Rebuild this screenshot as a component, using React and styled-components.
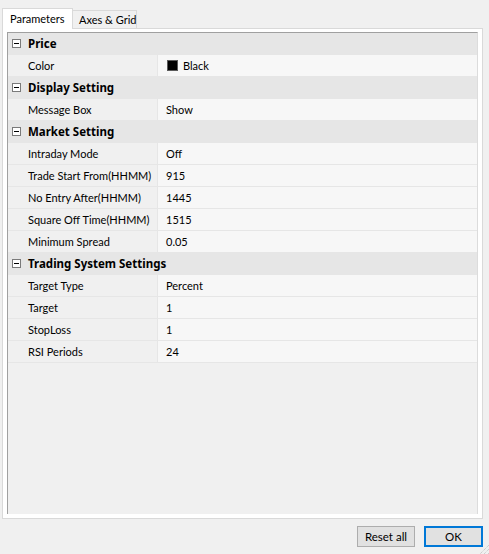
import React from 'react';
import styled, { createGlobalStyle } from 'styled-components';

const GlobalStyle = createGlobalStyle`
    html, body {
        margin: 0;
        padding: 0;
        background: #f0f0f0;
    }
    body {
        font-family: Lato, "Liberation Sans", sans-serif;
        font-size: 11px;
        color: #000;
    }
`;

const sections = [
    { title: 'Price', items: [{ label: 'Color', value: 'Black', swatch: '#000' }] },
    { title: 'Display Setting', items: [{ label: 'Message Box', value: 'Show' }] },
    {
        title: 'Market Setting',
        items: [
            { label: 'Intraday Mode', value: 'Off' },
            { label: 'Trade Start From(HHMM)', value: '915' },
            { label: 'No Entry After(HHMM)', value: '1445' },
            { label: 'Square Off Time(HHMM)', value: '1515' },
            { label: 'Minimum Spread', value: '0.05' },
        ],
    },
    {
        title: 'Trading System Settings',
        items: [
            { label: 'Target Type', value: 'Percent' },
            { label: 'Target', value: '1' },
            { label: 'StopLoss', value: '1' },
            { label: 'RSI Periods', value: '24' },
        ],
    },
];

const Window = styled.div`
    position: relative;
    width: 489px;
    height: 554px;
    display: flex;
    flex-direction: column;
    box-sizing: border-box;
    overflow: hidden;
`;

const TabStrip = styled.div`
    display: flex;
    align-items: flex-end;
    height: 28px;
    padding-left: 2px;
`;

const Tab = styled.div`
    display: flex;
    align-items: center;
    box-sizing: border-box;
    padding: 0 6px;
    border: 1px solid #d9d9d9;
    border-bottom: none;
    white-space: nowrap;
    ${({ $active }) => $active ? `
        position: relative;
        z-index: 1;
        height: 21px;
        margin-bottom: -1px;
        width: 71px;
        background: #fff;
        padding-left: 7px;
        padding-bottom: 1px;
    ` : `
        height: 18px;
        width: 64px;
        border-left: none;
        background: #f0f0f0;
    `}
`;

const Panel = styled.div`
    margin: 0 6px 0 2px;
    height: 491px;
    box-sizing: border-box;
    border: 1px solid #d9d9d9;
    background: #fff;
    padding: 3px 4px 4px 4px;
    display: flex;
`;

const Grid = styled.div`
    flex: 1;
    box-sizing: border-box;
    border-top: 1px solid #a0a0a0;
    border-left: 1px solid #a0a0a0;
    border-right: 1px solid #dcdcdc;
    background: #f0f0f0;
    display: flex;
    flex-direction: column;
`;

const CategoryRow = styled.div`
    height: 22px;
    display: flex;
    align-items: center;
    background: #e6e6e6;
    font-family: "Noto Sans", Lato, sans-serif;
    font-size: 11.5px;
    font-weight: bold;
    box-sizing: border-box;
    padding-bottom: 1px;
`;

const Toggle = styled.span`
    width: 9px;
    height: 9px;
    box-sizing: border-box;
    border: 1px solid #7a7a7a;
    background: #fff;
    margin: 0 7px 0 4px;
    display: flex;
    align-items: center;
    justify-content: center;
    &::after {
        content: '';
        width: 5px;
        height: 1px;
        background: #000;
    }
`;

const PropRow = styled.div`
    height: 22px;
    display: grid;
    grid-template-columns: 150px 1fr;
    box-sizing: border-box;
    border-bottom: 1px solid #e6e6e6;
`;

const Label = styled.div`
    display: flex;
    align-items: center;
    padding-left: 20px;
    border-right: 1px solid #e6e6e6;
    white-space: nowrap;
    overflow: hidden;
`;

const Value = styled.div`
    display: flex;
    align-items: center;
    padding-left: 8px;
    background: #f7f7f7;
`;

const Swatch = styled.span`
    width: 11px;
    height: 11px;
    box-sizing: border-box;
    border: 1px solid #5a5a5a;
    background: ${({ $color }) => $color};
    margin: 0 5px 0 1px;
`;

const Footer = styled.div`
    display: flex;
    justify-content: flex-end;
    gap: 9px;
    padding: 7px 6px 0 0;
`;

const Button = styled.button`
    font-family: inherit;
    font-size: 11.5px;
    color: #000;
    height: 21px;
    width: ${({ $w }) => $w}px;
    box-sizing: border-box;
    background: #e1e1e1;
    border: ${({ $default }) => $default ? '2px solid #0078d7' : '1px solid #adadad'};
    padding: 0;
    display: flex;
    align-items: center;
    justify-content: center;
`;

const Grip = styled.svg`
    position: absolute;
    right: 0;
    bottom: 0;
`;

function ResizeGrip() {
    return (
        <Grip width="10" height="10" viewBox="0 0 10 10">
            <g stroke="#bdbdbd" strokeWidth="1" strokeDasharray="1 1">
                <line x1="10" y1="1" x2="1" y2="10" />
                <line x1="10" y1="5" x2="5" y2="10" />
                <line x1="10" y1="9" x2="9" y2="10" />
            </g>
        </Grip>
    );
}

export default function App() {
    return (
        <>
            <GlobalStyle />
            <Window>
                <TabStrip>
                    <Tab $active>Parameters</Tab>
                    <Tab>Axes &amp; Grid</Tab>
                </TabStrip>
                <Panel>
                    <Grid>
                        {sections.map((s) => (
                            <React.Fragment key={s.title}>
                                <CategoryRow>
                                    <Toggle />
                                    {s.title}
                                </CategoryRow>
                                {s.items.map((it) => (
                                    <PropRow key={it.label}>
                                        <Label>{it.label}</Label>
                                        <Value>
                                            {it.swatch && <Swatch $color={it.swatch} />}
                                            {it.value}
                                        </Value>
                                    </PropRow>
                                ))}
                            </React.Fragment>
                        ))}
                    </Grid>
                </Panel>
                <Footer>
                    <Button $w={58}>Reset all</Button>
                    <Button $w={59} $default>OK</Button>
                </Footer>
                <ResizeGrip />
            </Window>
        </>
    );
}
